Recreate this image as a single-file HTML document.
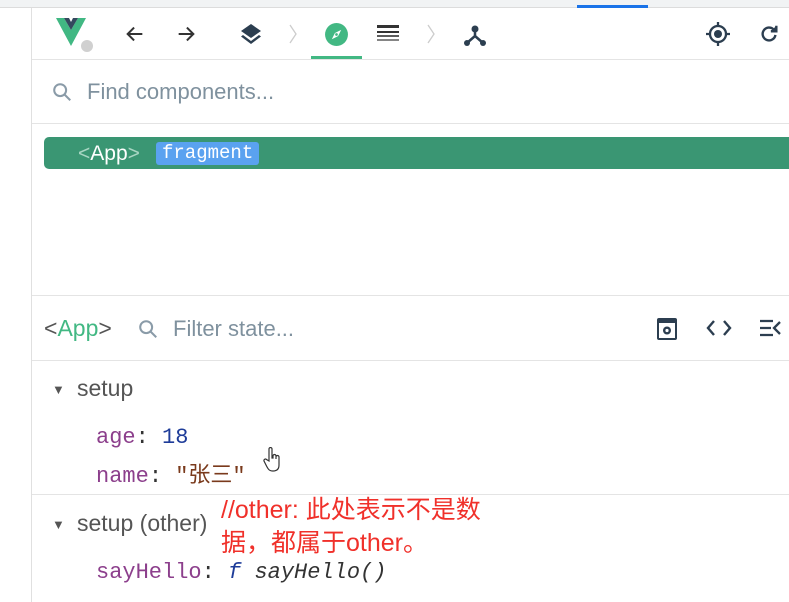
<!DOCTYPE html>
<html><head><meta charset="utf-8"><style>
*{margin:0;padding:0;box-sizing:border-box}
body{width:789px;height:602px;overflow:hidden;background:#fff;font-family:"Liberation Sans","Noto Sans CJK SC",sans-serif;position:relative}
.a{position:absolute;white-space:nowrap}
.mono{font-family:"Liberation Mono","Noto Sans CJK SC",monospace}
</style></head><body>
<div class="a" style="left:0;top:0;width:789px;height:8px;background:#f1f3f4;border-bottom:1px solid #dcdcdc"></div>
<div class="a" style="left:577px;top:5px;width:71px;height:3px;background:#1a73e8"></div>
<div class="a" style="left:31px;top:8px;width:1px;height:594px;background:#e0e0e0"></div>
<div class="a" style="left:32px;top:59px;width:757px;height:1px;background:#e4e4e4"></div>
<svg class="a" style="left:54px;top:16px" width="42" height="40" viewBox="0 0 42 40">
<path d="M2 2h8l7 12 7-12h8L17 30z" fill="#41b883"/><path d="M10 2h5l2 4 2-4h5l-7 12z" fill="#34495e"/>
<circle cx="33" cy="30" r="6" fill="#d0d0d0"/></svg>
<svg class="a" style="left:124px;top:23px" width="22" height="22" viewBox="0 0 24 24" fill="none" stroke="#333" stroke-width="2.2"><path d="M20 12H4M11 5l-7 7 7 7"/></svg>
<svg class="a" style="left:175px;top:23px" width="22" height="22" viewBox="0 0 24 24" fill="none" stroke="#333" stroke-width="2.2"><path d="M4 12h16M13 5l7 7-7 7"/></svg>
<svg class="a" style="left:239px;top:22px" width="24" height="24" viewBox="0 0 24 24" fill="#2c3e50"><path d="M12 2 2 9l10 7 10-7z"/><path d="M4 13l8 6 8-6 2 1.5-10 7.5-10-7.5z"/></svg>
<svg class="a" style="left:288px;top:23px" width="10" height="22" viewBox="0 0 10 22" fill="none" stroke="#ccc" stroke-width="1.3"><path d="M2 2l6 9-6 9"/></svg>
<svg class="a" style="left:324px;top:22px" width="25" height="25" viewBox="0 0 24 24"><circle cx="12" cy="12" r="11" fill="#42b883"/><path d="M16.5 7.5 13.5 13.5 7.5 16.5 10.5 10.5z" fill="#fff"/><circle cx="12" cy="12" r="1.3" fill="#42b883"/></svg>
<div class="a" style="left:311px;top:56px;width:51px;height:3px;background:#42b883"></div>
<svg class="a" style="left:376px;top:24px" width="24" height="20" viewBox="0 0 24 20" fill="#333"><rect x="1" y="1" width="22" height="3"/><rect x="1" y="7" width="22" height="2"/><rect x="1" y="11" width="22" height="2" opacity=".8"/><rect x="1" y="15" width="22" height="2" opacity=".6"/></svg>
<svg class="a" style="left:426px;top:23px" width="10" height="22" viewBox="0 0 10 22" fill="none" stroke="#ccc" stroke-width="1.3"><path d="M2 2l6 9-6 9"/></svg>
<svg class="a" style="left:463px;top:23px" width="24" height="24" viewBox="0 0 24 24" fill="#2c3e50"><circle cx="12" cy="6" r="3.5"/><circle cx="4" cy="20" r="3"/><circle cx="20" cy="20" r="3"/><path d="M12 6v7L4 20M12 13l8 7" stroke="#2c3e50" stroke-width="2.5" fill="none"/></svg>
<svg class="a" style="left:705px;top:21px" width="26" height="26" viewBox="0 0 26 26"><circle cx="13" cy="13" r="8" fill="none" stroke="#2c3e50" stroke-width="2.3"/><circle cx="13" cy="13" r="4" fill="#2c3e50"/><path d="M13 1v4M13 21v4M1 13h4M21 13h4" stroke="#2c3e50" stroke-width="2.3"/></svg>
<svg class="a" style="left:758px;top:23px" width="22" height="22" viewBox="0 0 24 24" fill="none" stroke="#2c3e50" stroke-width="2.6"><path d="M19 13a7 7 0 1 1-2-6"/><path d="M20 3v6h-6" fill="#2c3e50"/></svg>
<svg class="a" style="left:51px;top:81px" width="22" height="22" viewBox="0 0 24 24" fill="none" stroke="#8a9ba8" stroke-width="2.2"><circle cx="10" cy="10" r="6.5"/><path d="M15 15l6 6"/></svg>
<div class="a" style="left:87px;top:79px;font-size:22px;color:#7f919e">Find components...</div>
<div class="a" style="left:32px;top:123px;width:757px;height:1px;background:#e4e4e4"></div>
<div class="a" style="left:44px;top:137px;width:745px;height:32px;background:#3a9673;border-radius:5px 0 0 5px"></div>
<div class="a" style="left:78px;top:142px;font-size:21px;color:#fff"><span style="color:#a8d6c3">&lt;</span>App<span style="color:#a8d6c3">&gt;</span></div>
<div class="a mono" style="left:156px;top:142px;height:23px;padding:0 6px;background:#5aa2f0;border-radius:3px;color:#fff;font-size:19px;line-height:23px">fragment</div>
<div class="a" style="left:32px;top:295px;width:757px;height:1px;background:#e4e4e4"></div>
<div class="a" style="left:44px;top:315px;font-size:23px;color:#555"><span>&lt;</span><span style="color:#42b883">App</span><span>&gt;</span></div>
<svg class="a" style="left:137px;top:318px" width="22" height="22" viewBox="0 0 24 24" fill="none" stroke="#8a9ba8" stroke-width="2.2"><circle cx="10" cy="10" r="6.5"/><path d="M15 15l6 6"/></svg>
<div class="a" style="left:173px;top:316px;font-size:22px;color:#7f919e">Filter state...</div>
<svg class="a" style="left:656px;top:317px" width="22" height="24" viewBox="0 0 22 24"><rect x="1" y="1" width="20" height="22" rx="2" fill="#2c3e50"/><rect x="3" y="6" width="16" height="15" fill="#fff"/><circle cx="11" cy="13.5" r="4" fill="#2c3e50"/><circle cx="11" cy="13.5" r="1.6" fill="#fff"/></svg>
<svg class="a" style="left:706px;top:318px" width="26" height="20" viewBox="0 0 26 20" fill="none" stroke="#2c3e50" stroke-width="2.4"><path d="M8 3l-6 7 6 7M18 3l6 7-6 7"/></svg>
<svg class="a" style="left:759px;top:319px" width="22" height="18" viewBox="0 0 22 18" fill="none" stroke="#2c3e50" stroke-width="2.3"><path d="M1 2h13M1 9h11M1 16h13M21 3l-6 6 6 6"/></svg>
<div class="a" style="left:32px;top:360px;width:757px;height:1px;background:#e4e4e4"></div>
<div class="a" style="left:52px;top:382px;font-size:13px;color:#555">▼</div>
<div class="a" style="left:77px;top:375px;font-size:23px;color:#555">setup</div>
<div class="a mono" style="left:96px;top:425px;font-size:22px"><span style="color:#8c3f8c">age</span><span style="color:#333">: </span><span style="color:#1e3c99">18</span></div>
<div class="a mono" style="left:96px;top:457px;font-size:22px"><span style="color:#8c3f8c">name</span><span style="color:#333">: </span><span style="color:#7a3a1c">"张三"</span></div>
<svg class="a" style="left:263px;top:447px" width="20" height="26" viewBox="0 0 20 26" fill="#fff" stroke="#333" stroke-width="1.2"><path d="M6 2a1.5 1.5 0 0 1 3 0v9h1V9a1.5 1.5 0 0 1 3 0v3V10a1.5 1.5 0 0 1 3 0v8c0 4-2 6-6 6s-5-2-7-6l-2-4a1.5 1.5 0 0 1 2.5-1.5L6 14z"/></svg>
<div class="a" style="left:32px;top:494px;width:757px;height:1px;background:#e4e4e4"></div>
<div class="a" style="left:52px;top:517px;font-size:13px;color:#555">▼</div>
<div class="a" style="left:77px;top:510px;font-size:23px;color:#555">setup (other)</div>
<div class="a" style="left:221px;top:494px;font-size:25px;line-height:33px;color:#f0302a">//other: 此处表示不是数<br>据，都属于other。</div>
<div class="a mono" style="left:96px;top:560px;font-size:22px"><span style="color:#8c3f8c">sayHello</span><span style="color:#333">: </span><i style="color:#1e3c99">f</i> <i style="color:#333">sayHello()</i></div>
</body></html>
